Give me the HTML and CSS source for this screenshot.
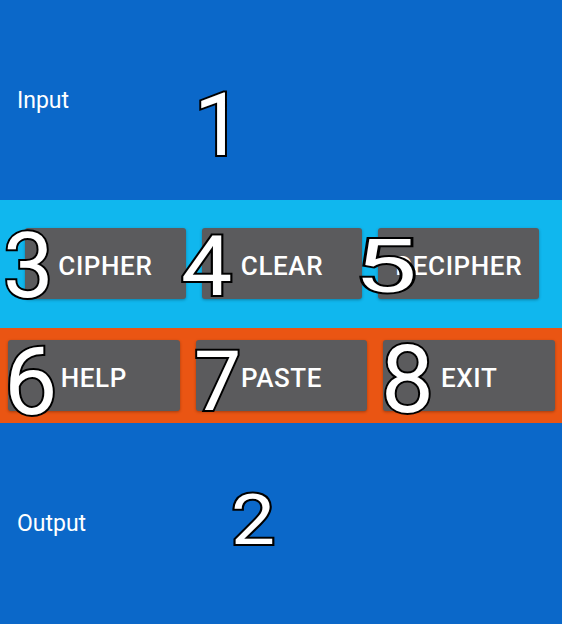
FILE: index.html
```html
<!DOCTYPE html>
<html>
<head>
<meta charset="utf-8">
<link rel="stylesheet" href="styles.css">
</head>
<body>
<div class="screen">
  <section class="io io-input"><span class="label">Input</span></section>
  <div class="row row-cipher">
    <button class="btn">CIPHER</button>
    <button class="btn">CLEAR</button>
    <button class="btn">DECIPHER</button>
  </div>
  <div class="row row-tools">
    <button class="btn">HELP</button>
    <button class="btn">PASTE</button>
    <button class="btn">EXIT</button>
  </div>
  <section class="io io-output"><span class="label">Output</span></section>

  <span class="num n1">1</span>
  <span class="num n2">2</span>
  <span class="num n3">3</span>
  <span class="num n4">4</span>
  <span class="num n5">5</span>
  <span class="num n6">6</span>
  <span class="num n7">7</span>
  <span class="num n8">8</span>
</div>
</body>
</html>
```
FILE: styles.css
```css
html, body {
  margin: 0;
  padding: 0;
}
body {
  background: #0b68c9;
  font-family: Roboto, "Noto Sans", sans-serif;
}
.screen {
  position: relative;
  width: 562px;
  height: 624px;
  display: flex;
  flex-direction: column;
  background: #0b68c9;
  overflow: hidden;
}
.io {
  display: flex;
  align-items: center;
  padding-left: 17px;
}
.io-input {
  height: 200px;
}
.io-output {
  flex: 1;
}
.label {
  color: #ffffff;
  font-size: 23px;
  line-height: 27px;
}
.row {
  display: grid;
  grid-template-columns: 1fr 1fr 1fr;
  column-gap: 16px;
}
.row-cipher {
  background: #10b7ee;
  padding: 28px 23px 29px 25px;
}
.row-tools {
  background: #ea5513;
  padding: 12px 7px 12px 8px;
}
.btn {
  height: 71px;
  border: none;
  border-radius: 3px;
  background: #5b5b5d;
  color: #ffffff;
  font-family: Roboto, sans-serif;
  font-weight: 500;
  font-size: 26px;
  letter-spacing: 0.6px;
  padding: 4px 0 0 0;
  box-shadow: 0 1px 3px rgba(0, 0, 0, 0.3);
}
.num {
  position: absolute;
  font-family: Roboto, sans-serif;
  font-weight: 400;
  line-height: 1;
  color: #ffffff;
  -webkit-text-stroke: 4px #000000;
  paint-order: stroke fill;
  transform-origin: left top;
}
.n1 { font-size: 87px; left: 194px; top: 82px; }
.n2 { font-size: 70px; left: 231px; top: 485px; transform: scaleX(1.12); }
.n3 { font-size: 90px; left: 3px; top: 222px; }
.n4 { font-size: 83px; left: 181px; top: 225px; transform: scaleX(1.1); }
.n5 { font-size: 75px; left: 354px; top: 229px; transform: scaleX(1.5); }
.n6 { font-size: 95px; left: 4px; top: 334px; }
.n7 { font-size: 84px; left: 194px; top: 340px; }
.n8 { font-size: 94px; left: 381px; top: 333px; }
```
